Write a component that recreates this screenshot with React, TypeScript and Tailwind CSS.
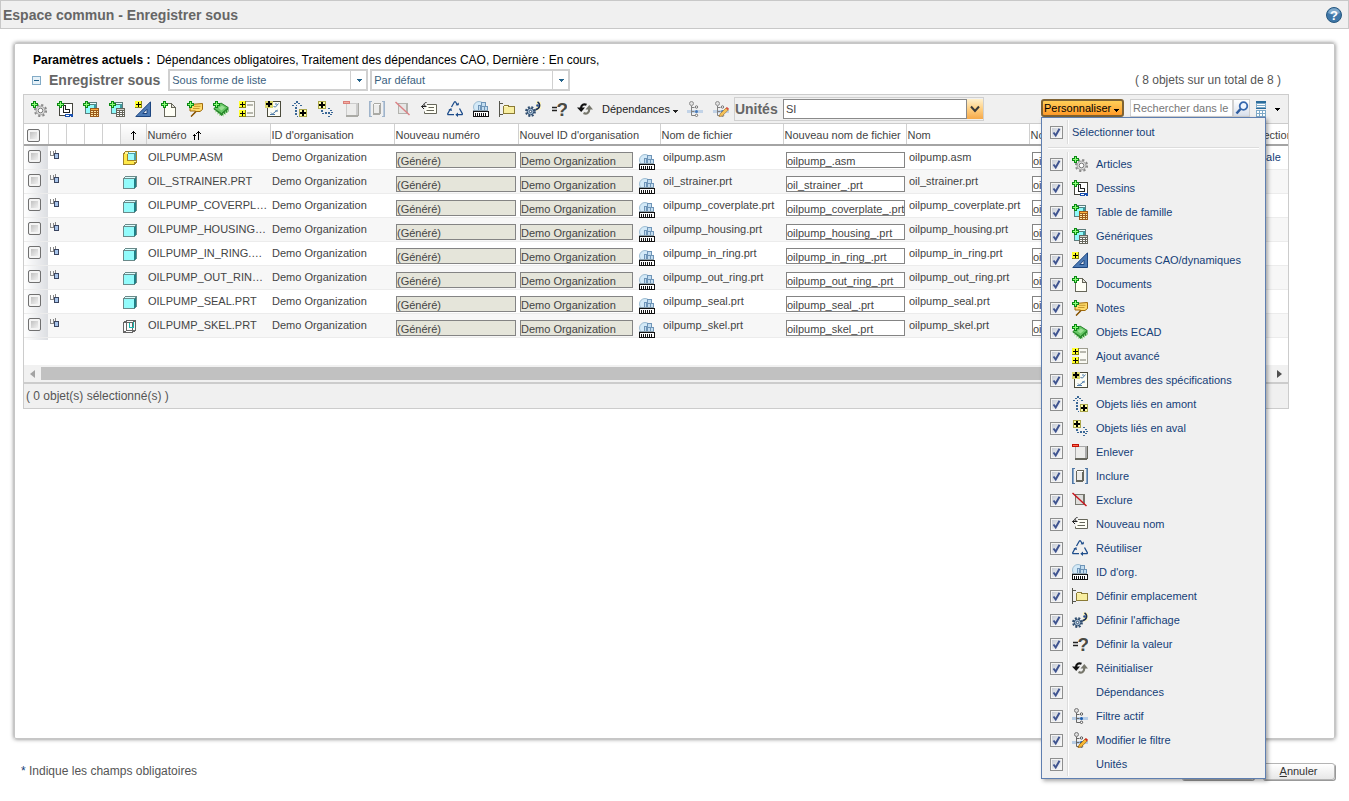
import { useState } from "react";
import type { ReactNode } from "react";
import { clsx } from "clsx";

function Svg({ children, smooth, className }: { children: ReactNode; smooth?: boolean; className?: string }) {
  return (
    <svg
      viewBox="0 0 16 16"
      shapeRendering={smooth ? "auto" : "crispEdges"}
      aria-hidden="true"
      className={clsx("h-4 w-4 shrink-0", className)}
    >
      {children}
    </svg>
  );
}

function GreenPlus() {
  return (
    <g shapeRendering="crispEdges">
      <path d="M2 0h3v2h2v3H5v2H2V5H0V2h2z" fill="#0c8a14" />
      <path d="M3 1h1v2h2v1H4v2H3V4H1V3h2z" fill="#8dff7a" />
    </g>
  );
}

function YellowPlus({ x, y }: { x: number; y: number }) {
  return (
    <g shapeRendering="crispEdges">
      <rect x={x} y={y} width="7" height="7" fill="#8a8610" />
      <rect x={x} y={y} width="6" height="6" fill="#ffff28" />
      <rect x={x + 3} y={y + 1} width="1" height="5" fill="#000" />
      <rect x={x + 1} y={y + 3} width="5" height="1" fill="#000" />
    </g>
  );
}

function BoldPlus({ x, y }: { x: number; y: number }) {
  return (
    <g shapeRendering="crispEdges">
      <rect x={x} y={y} width="8" height="8" fill="#aaa64a" />
      <rect x={x + 1} y={y + 1} width="6" height="6" fill="#ffffa8" />
      <path d={`M${x + 3} ${y + 1}h2v2h2v2h-2v2h-2v-2h-2v-2h2z`} fill="#000" />
    </g>
  );
}

function GearIcon() {
  return (
    <Svg smooth>
      <circle cx="9.500" cy="9.500" r="5.600" fill="none" stroke="#8a8a8a" strokeWidth="2" strokeDasharray="2.200 2.200" />
      <circle cx="9.500" cy="9.500" r="4.400" fill="#d9d9d9" stroke="#a0a0a0" />
      <circle cx="9.500" cy="9.500" r="2.300" fill="#fff" stroke="#7a7a7a" />
      <GreenPlus />
    </Svg>
  );
}

function DrawingIcon() {
  return (
    <Svg>
      <path d="M2 2h14v13H2z" fill="#44443c" />
      <path d="M3 3h12v11H3z" fill="#fff" />
      <path d="M6 4h3v4h4v4H6z" fill="#222" />
      <path d="M7 5h1v4h4v2H7z" fill="#fff" />
      <path d="M8 13h8v3h-2v-1h-1v1H8z" fill="#1950b0" />
      <path d="M9 14h3v1H9z" fill="#fff" />
      <GreenPlus />
    </Svg>
  );
}

function FamilyTableIcon({ head, line, fill }: { head: string; line: string; fill: string }) {
  return (
    <Svg>
      <path d="M2 3l2-2h10v11l-2 1H2z" fill="#5c7c7c" />
      <path d="M3 4h8v8H3z" fill="#8ffafa" />
      <path d="M4 2h9v1H4z" fill="#e6ffff" />
      <path d="M11 3h2v5h-2z" fill="#3d9a9e" />
      <rect x="7" y="7" width="9" height="9" fill={line} />
      <path d="M8 8h7v1H8z" fill={head} />
      <path d="M8 10h2v1H8zM11 10h2v1h-2zM14 10h1v1h-1zM8 12h2v1H8zM11 12h2v1h-2zM14 12h1v1h-1zM8 14h2v1H8zM11 14h2v1h-2zM14 14h1v1h-1z" fill={fill} />
      <GreenPlus />
    </Svg>
  );
}

function CadIcon() {
  return (
    <Svg smooth>
      <path d="M15.500 .8v14.700H.8z" fill="#4c7ab5" stroke="#1c457f" />
      <path d="M12 8.200v4.300H7.800z" fill="#f0f0f0" stroke="#1c457f" />
      <YellowPlus x={0} y={0} />
    </Svg>
  );
}

function DocumentIcon() {
  return (
    <Svg>
      <path d="M3 2h8v1h1v1h1v1h1v1h1v10H3z" fill="#66665a" />
      <path d="M4 3h6v4h4v8H4z" fill="#fffff6" />
      <path d="M11 4h1v1h1v1h-2z" fill="#e6e6dc" />
      <GreenPlus />
    </Svg>
  );
}

function NoteIcon() {
  return (
    <Svg smooth>
      <path d="M3 3.500L15.500 2.500v6L13 10.500H8.500L4.500 15.500l1-1 3-4.500H3z" fill="#ffdb6b" stroke="#a06a0a" />
      <path d="M7 5.300h6.500M6 7.500h6.500" stroke="#c79a30" />
      <path d="M9 10.500L4 15.500" stroke="#8a5a10" strokeWidth="1.500" />
      <GreenPlus />
    </Svg>
  );
}

function EcadIcon() {
  return (
    <Svg smooth>
      <path d="M.5 8L8 2l7.500 4.500v4L8.500 15z" fill="#2b8f2e" />
      <path d="M.8 7.500L8 2l7.200 4.500-6.700 6z" fill="#67c765" stroke="#237a27" strokeWidth=".8" />
      <path d="M2.500 9.500v2M4.500 11v2.500M6.500 12.500v2.500M10.500 12v3.500M12.500 10.500v3.500M14.500 9v3" stroke="#a9dca0" strokeWidth=".8" />
      <path d="M5.500 7l3.500-2.500 3 2-3.500 3z" fill="#9be094" />
      <GreenPlus />
    </Svg>
  );
}

function AdvancedAddIcon() {
  return (
    <Svg>
      <path d="M7 0h9v16H7z" fill="#9d9d90" />
      <path d="M7 1h8v14H7z" fill="#fafaf4" />
      <path d="M8 3h6v2H8zM8 11h6v2H8z" fill="#b8b8ae" />
      <YellowPlus x={0} y={0} />
      <YellowPlus x={0} y={9} />
    </Svg>
  );
}

function SpecMembersIcon() {
  return (
    <Svg>
      <path d="M2 0h14v16H2z" fill="#4b4b3c" />
      <path d="M3 1h12v14H3z" fill="#fcfcf4" />
      <g shapeRendering="auto" fill="none" stroke="#4d7aa8">
        <path d="M8.500 5.500l2 .5 3-3.500M10 3h2M6 11.500l1.500 1.500 5-4M5 13.500h5M10 10h3" />
      </g>
      <path d="M0 0h8v7H0z" fill="#d8d56a" />
      <path d="M3 0h2v2h2v2H5v2H3V4H1V2h2z" fill="#000" />
    </Svg>
  );
}

function UpstreamIcon() {
  return (
    <Svg>
      <path d="M5 0h2v2H5zM3 2h2v1H3zM7 2h2v1H7zM1 4h2v1H1zM9 4h2v1H9zM5 4h1v1H5zM4 6h2v2H4zM4 9h2v2H4zM4 12h2v2H4zM6 15h1v1H6z" fill="#3a6796" />
      <BoldPlus x={8} y={8} />
    </Svg>
  );
}

function DownstreamIcon() {
  return (
    <Svg>
      <path d="M4 9h2v2H4zM5 12h2v1H5zM8 11h2v2H8zM11 11h2v2h-2zM11 7h2v1h-2zM13 9h2v1h-2zM14 11h2v1h-2zM13 13h2v1h-2zM11 15h2v1h-2z" fill="#3a6796" />
      <BoldPlus x={1} y={0} />
    </Svg>
  );
}

function RemoveIcon() {
  return (
    <Svg>
      <path d="M3 2h13v12l-2 2H3z" fill="#66665c" />
      <path d="M3 2h12v12H3z" fill="#aaa" />
      <path d="M4 3h9v11H4z" fill="#ececea" />
      <path d="M0 0h7v3H0z" fill="#c31306" />
      <path d="M1 1h5v1H1z" fill="#ff6a52" />
    </Svg>
  );
}

function IncludeIcon() {
  return (
    <Svg>
      <path d="M0 0h3v1H2v14h1v1H0zM13 0h3v16h-3v-1h1V1h-1z" fill="#5379a5" />
      <path d="M1 1h1v14H1zM14 1h1v14h-1z" fill="#88a8cb" />
      <path d="M4 3l1-1h7v10l-2 2H4z" fill="#66665c" />
      <path d="M5 4h5v8H5z" fill="#ececea" />
      <path d="M5 3h6v1H5z" fill="#fff" />
    </Svg>
  );
}

function ExcludeIcon() {
  return (
    <Svg smooth>
      <path d="M3 2h10v11H3z" fill="#77776e" />
      <path d="M4 3h7v9H4z" fill="#dededc" />
      <path d="M.5 1L14.500 14" stroke="#c8161d" strokeWidth="1.500" />
    </Svg>
  );
}

function RenameIcon() {
  return (
    <Svg smooth>
      <path d="M6 3.500h9.500v9H3.500v-2" fill="#fffff6" stroke="#66665a" />
      <path d="M5.500 1.500C2.500 1.500 2.500 4.500 5 5.500M.5 5.500h5M3 3.500l-2.500 2 2.500 2.500" fill="none" stroke="#222" />
      <path d="M7.500 6.500h5.500M5.500 9.500h7.500" stroke="#66665a" />
    </Svg>
  );
}

function ReuseIcon() {
  return (
    <Svg smooth>
      <path d="M4.500 6L7.500 .8h1l2 3.500M12.500 7.500l3 5.500-.5.700h-4.500M7 13.700H1l-.4-.7L3 8.500" fill="none" stroke="#1e4d8b" strokeWidth="1.300" />
      <path d="M8.500 4.300h3.300V1.500zM11 11.500v4.500l-2.700-2.300zM1.300 9l3-2 .7 3z" fill="#1e4d8b" />
    </Svg>
  );
}

function OrgIcon() {
  return (
    <Svg>
      <circle cx="6" cy="6" r="5.500" fill="#d3e9f7" stroke="#9dbcd2" shapeRendering="auto" />
      <path d="M5 4h3V1h5v4h2v5H5z" fill="#6f95b8" />
      <path d="M6 5h1v4H6zM9 2h3v3H9zM9 6h2v3H9zM12 6h2v3h-2z" fill="#c3ddf0" />
      <path d="M0 9h15v1H0z" fill="#8ba0ae" />
      <path d="M0 10h16v6H0z" fill="#111" />
      <path d="M1 11h14v4H1z" fill="#fff" />
      <path d="M2 12h1v3H2zM4 12h1v3H4zM6 12h1v3H6zM8 12h1v3H8zM10 12h1v3h-1zM12 12h1v3h-1z" fill="#111" />
    </Svg>
  );
}

function LocationIcon() {
  return (
    <Svg>
      <path d="M0 0h1v16H0zM0 2h4v1H0zM0 13h4v1H0z" fill="#55554c" />
      <path d="M4 5l1-1h4l1 1h5l1 1v7H4z" fill="#8a7a35" />
      <path d="M5 6h10v6H5z" fill="#f8eea0" />
      <path d="M5 5h4v1H5z" fill="#fff8c2" />
    </Svg>
  );
}

function DisplayIcon() {
  return (
    <Svg smooth>
      <path d="M11 0l5 1v7l-5 2z" fill="#fff6c0" />
      <circle cx="5.500" cy="10.500" r="4.400" fill="none" stroke="#2f4d6f" strokeWidth="2" strokeDasharray="2 1.500" />
      <circle cx="5.500" cy="10.500" r="3.300" fill="#a4bdd4" stroke="#2f4d6f" />
      <circle cx="5.500" cy="10.500" r="1.200" fill="#fff" stroke="#2f4d6f" />
      <path d="M12.500 .8c3 2 3.200 6-2 8" fill="none" stroke="#1d2f52" strokeWidth="1.600" />
      <circle cx="12.500" cy="4.500" r="1.300" fill="#2a4f96" />
    </Svg>
  );
}

function ValueIcon() {
  return (
    <Svg smooth>
      <path d="M1 6.500h5M1 9.500h5" stroke="#222" strokeWidth="1.500" />
      <text x="5.500" y="15" fontSize="19" fontWeight="bold" fontFamily="Liberation Sans, sans-serif" fill="#4a4a44">
        ?
      </text>
    </Svg>
  );
}

function ResetIcon() {
  return (
    <Svg smooth>
      <path d="M9.500 3.800C6.500 2.500 4 4 4 7.500" fill="none" stroke="#111" strokeWidth="2.200" />
      <path d="M0 6.500h8L4.200 11z" fill="#111" />
      <path d="M6.500 12c3 1.500 5.800 0 5.800-4" fill="none" stroke="#77776c" strokeWidth="2.200" />
      <path d="M8.500 8.500H16L12.300 4z" fill="#77776c" />
    </Svg>
  );
}

function FilterTree() {
  return (
    <>
      <path d="M0 9h16v3H0z" fill="#b7cde6" />
      <circle cx="4.500" cy="2.500" r="2" fill="#ddd" stroke="#777" />
      <path d="M4.500 5v9.500H8M4.500 6.500h3M4.500 10.500h3" fill="none" stroke="#666" />
      <circle cx="9.500" cy="6" r="1.200" fill="#fff" stroke="#555" />
      <circle cx="9.500" cy="10.500" r="1.500" fill="#1b5cad" />
      <circle cx="9.500" cy="14.300" r="1.200" fill="#fff" stroke="#555" />
    </>
  );
}

function FilterIcon() {
  return (
    <Svg smooth>
      <FilterTree />
    </Svg>
  );
}

function EditFilterIcon() {
  return (
    <Svg smooth>
      <FilterTree />
      <path d="M6 15.800l1.200-3 6-6 2.200 2-6 6z" fill="#f7b733" stroke="#8f5a0d" strokeWidth=".7" />
      <path d="M12.700 7.200l1.300-1.200 2 1.800-1.200 1.500z" fill="#d3281e" />
    </Svg>
  );
}

function PartIcon() {
  return (
    <Svg>
      <path d="M1 4l2-2h12v10l-2 3H1z" fill="#6a8a8a" />
      <path d="M2 5h10v9H2z" fill="#92fbfb" />
      <path d="M3 3h10v1H3z" fill="#dcffff" />
      <path d="M12 5l2-2v9l-2 2z" fill="#1f7f86" />
    </Svg>
  );
}

function AssemblyIcon() {
  return (
    <Svg>
      <path d="M1 3l2-2h12v11l-3 3H1z" fill="#a08328" />
      <path d="M2 4h3v7h7v3H2z" fill="#ffe94a" />
      <path d="M3 2h3v2H3zM12 11h2v1h-2z" fill="#fff6a0" />
      <path d="M6 2h8v8H6z" fill="#4fa0a6" />
      <path d="M6 4h6v6H6z" fill="#9ffcfc" />
      <path d="M7 2h6v1H7z" fill="#e6ffff" />
    </Svg>
  );
}

function SkeletonIcon() {
  return (
    <Svg>
      <path d="M1.500 4.500h9v10h-9zM4.500 2.500h9v10h-9zM1.500 4.500l3-2M10.500 4.500l3-2M10.500 14.500l3-2M1.500 14.500l3-2" fill="#fff" fillOpacity=".5" stroke="#666" />
      <path d="M7.500 5v4.500h4V4" fill="none" stroke="#17b5ad" />
    </Svg>
  );
}

function StatusIcon() {
  return (
    <svg viewBox="0 0 10 10" shapeRendering="crispEdges" aria-hidden="true" className="h-2.5 w-2.5">
      <path d="M0 1h1v4H0zM0 5h4v1H0zM3 1h1v4H3z" fill="#8a8a8a" />
      <path d="M4 3h5v6H4z" fill="#3a4560" />
      <path d="M5 4h3v4H5z" fill="#a8c4ea" />
      <path d="M5 0h1v3H5z" fill="#888" />
    </svg>
  );
}

interface Tool {
  label: string;
  icon?: ReactNode;
  disabled?: boolean;
}

const TOOLS: Tool[] = [
  { label: "Articles", icon: <GearIcon /> },
  { label: "Dessins", icon: <DrawingIcon /> },
  { label: "Table de famille", icon: <FamilyTableIcon head="#ffb13d" line="#9a5a1c" fill="#ffe9a8" /> },
  { label: "Génériques", icon: <FamilyTableIcon head="#d0d0c8" line="#66665c" fill="#ffffff" /> },
  { label: "Documents CAO/dynamiques", icon: <CadIcon /> },
  { label: "Documents", icon: <DocumentIcon /> },
  { label: "Notes", icon: <NoteIcon /> },
  { label: "Objets ECAD", icon: <EcadIcon /> },
  { label: "Ajout avancé", icon: <AdvancedAddIcon /> },
  { label: "Membres des spécifications", icon: <SpecMembersIcon /> },
  { label: "Objets liés en amont", icon: <UpstreamIcon /> },
  { label: "Objets liés en aval", icon: <DownstreamIcon /> },
  { label: "Enlever", icon: <RemoveIcon />, disabled: true },
  { label: "Inclure", icon: <IncludeIcon />, disabled: true },
  { label: "Exclure", icon: <ExcludeIcon />, disabled: true },
  { label: "Nouveau nom", icon: <RenameIcon /> },
  { label: "Réutiliser", icon: <ReuseIcon /> },
  { label: "ID d'org.", icon: <OrgIcon /> },
  { label: "Définir emplacement", icon: <LocationIcon /> },
  { label: "Définir l'affichage", icon: <DisplayIcon /> },
  { label: "Définir la valeur", icon: <ValueIcon /> },
  { label: "Réinitialiser", icon: <ResetIcon /> },
  { label: "Dépendances" },
  { label: "Filtre actif", icon: <FilterIcon /> },
  { label: "Modifier le filtre", icon: <EditFilterIcon /> },
  { label: "Unités" },
];

const ACTION_TOOLS = TOOLS.slice(0, 22);
const FILTER_TOOLS = TOOLS.slice(23, 25);

const ROWS = [
  { number: "OILPUMP.ASM", file: "oilpump.asm", newFile: "oilpump_.asm", icon: <AssemblyIcon />, selection: "Initiale" },
  { number: "OIL_STRAINER.PRT", file: "oil_strainer.prt", newFile: "oil_strainer_.prt", icon: <PartIcon /> },
  { number: "OILPUMP_COVERPLATE.PRT", file: "oilpump_coverplate.prt", newFile: "oilpump_coverplate_.prt", icon: <PartIcon /> },
  { number: "OILPUMP_HOUSING.PRT", file: "oilpump_housing.prt", newFile: "oilpump_housing_.prt", icon: <PartIcon /> },
  { number: "OILPUMP_IN_RING.PRT", file: "oilpump_in_ring.prt", newFile: "oilpump_in_ring_.prt", icon: <PartIcon /> },
  { number: "OILPUMP_OUT_RING.PRT", file: "oilpump_out_ring.prt", newFile: "oilpump_out_ring_.prt", icon: <PartIcon /> },
  { number: "OILPUMP_SEAL.PRT", file: "oilpump_seal.prt", newFile: "oilpump_seal_.prt", icon: <PartIcon /> },
  { number: "OILPUMP_SKEL.PRT", file: "oilpump_skel.prt", newFile: "oilpump_skel_.prt", icon: <SkeletonIcon /> },
];

function Caret({ className }: { className?: string }) {
  return (
    <svg viewBox="0 0 6 3" shapeRendering="crispEdges" aria-hidden="true" className={clsx("h-[3px] w-1.5 shrink-0", className)}>
      <path d="M0 0h6L3 3z" fill="currentColor" />
    </svg>
  );
}

function Tick({ label, checked, onChange }: { label: string; checked: boolean; onChange: (v: boolean) => void }) {
  return (
    <span className="inline-grid h-[13px] w-[13px] shrink-0">
      <input
        type="checkbox"
        aria-label={label}
        checked={checked}
        onChange={(e) => onChange(e.target.checked)}
        className="col-start-1 row-start-1 h-[13px] w-[13px] appearance-none border border-[#8e8f8f] bg-linear-to-br from-[#c4c9d2] to-white shadow-[inset_0_0_0_1px_#f4f4f4]"
      />
      {checked && (
        <svg viewBox="0 0 13 13" aria-hidden="true" className="pointer-events-none col-start-1 row-start-1 h-[13px] w-[13px]">
          <path d="M3.500 6.500L5.700 9.500 9.500 2.800" fill="none" stroke="#3f5490" strokeWidth="2" />
        </svg>
      )}
    </span>
  );
}

function RowCheckbox({ label }: { label: string }) {
  return (
    <input
      type="checkbox"
      aria-label={label}
      className="block h-[13px] w-[13px] appearance-none rounded-[2px] border border-[#707070] bg-linear-to-br from-[#b4b4b4] to-white shadow-[inset_0_0_0_2px_#f4f4f4] checked:bg-[#3f5490]"
    />
  );
}

function ViewSelect({ label, value }: { label: string; value: string }) {
  return (
    <div className="flex h-[22px] w-[200px] border-2 border-[#d0d0d0] bg-white">
      <select aria-label={label} defaultValue={value} className="min-w-0 flex-1 appearance-none px-0.5 text-[11px] text-[#3b5f80] outline-none">
        <option>{value}</option>
      </select>
      <span className="flex w-4 items-center justify-center border-l border-[#d0d0d0] text-[#23628a]">
        <Caret />
      </span>
    </div>
  );
}

function CustomizeMenu() {
  const [hidden, setHidden] = useState<string[]>([]);
  const toggle = (label: string, on: boolean) =>
    setHidden((prev) => (on ? prev.filter((l) => l !== label) : [...prev, label]));

  return (
    <div className="absolute top-full left-0 z-20 w-[225px] border border-[#5f7fb0] bg-[#f0f0f0] py-0.5 text-[11px] text-[#154078] shadow-[2px_2px_4px_rgba(0,0,0,0.35)]">
      <label className="flex h-6 items-center pl-2">
        <Tick
          label="Sélectionner tout"
          checked={hidden.length === 0}
          onChange={(on) => setHidden(on ? [] : TOOLS.map((t) => t.label))}
        />
        <span className="ml-1 h-full border-l border-[#dcdcdc] pl-1 leading-6 shadow-[inset_1px_0_0_#fff]">Sélectionner tout</span>
      </label>
      <div className="mx-1.5 my-[3px] h-0.5 border-b border-white bg-[#dcdcdc]" />
      {TOOLS.map((tool) => (
        <label key={tool.label} className="flex h-6 items-center pl-2">
          <Tick label={tool.label} checked={!hidden.includes(tool.label)} onChange={(on) => toggle(tool.label, on)} />
          <span className="ml-1 flex h-full items-center gap-2 border-l border-[#dcdcdc] pl-1 shadow-[inset_1px_0_0_#fff]">
            <span className="h-4 w-4">{tool.icon}</span>
            {tool.label}
          </span>
        </label>
      ))}
    </div>
  );
}

function Toolbar() {
  const [open, setOpen] = useState(true);

  return (
    <div className="flex h-[30px] items-center border border-[#cccccc] bg-[#f0f0f0] pr-2 pl-0.5">
      {ACTION_TOOLS.map((tool) => (
        <button
          key={tool.label}
          type="button"
          title={tool.label}
          disabled={tool.disabled}
          className="flex h-6 w-[26px] shrink-0 items-center justify-center disabled:opacity-50"
        >
          {tool.icon}
        </button>
      ))}
      <button type="button" className="flex h-6 shrink-0 items-center gap-0.5 px-1 text-[11px] text-[#222222]">
        Dépendances
        <Caret className="mt-1" />
      </button>
      {FILTER_TOOLS.map((tool) => (
        <button key={tool.label} type="button" title={tool.label} className="flex h-6 w-[26px] shrink-0 items-center justify-center opacity-80">
          {tool.icon}
        </button>
      ))}
      <div className="flex h-6 w-[250px] shrink-0 items-center border border-[#d0d0d0]">
        <label htmlFor="unites" className="w-12 shrink-0 text-sm font-bold text-[#666666]">
          Unités
        </label>
        <select id="unites" defaultValue="SI" className="h-5 min-w-0 flex-1 appearance-none border border-[#8a8a8a] bg-white px-0.5 text-[11px] text-[#444444] outline-none">
          <option>SI</option>
        </select>
        <span className="flex h-5 w-4 items-center justify-center bg-linear-to-b from-[#fff0cc] via-[#ffcf80] to-[#f5a94a]">
          <svg viewBox="0 0 10 8" aria-hidden="true" className="h-2 w-2.5">
            <path d="M1 1.500l4 4.500 4-4.500" fill="none" stroke="#3a3a3a" strokeWidth="2" />
          </svg>
        </span>
      </div>

      <div className="mt-1 ml-auto flex shrink-0 items-start self-start">
        <div className="relative">
          <button
            type="button"
            aria-expanded={open}
            onClick={() => setOpen((v) => !v)}
            className="flex h-[18px] w-[83px] items-center gap-0.5 rounded-[3px] border-2 border-[#7f6334] bg-linear-to-b from-[#ffcf57] to-[#ff9a28] pl-px text-[11px] text-black"
          >
            Personnaliser
            <Caret className="mt-1" />
          </button>
          {open && <CustomizeMenu />}
        </div>
        <input
          type="text"
          aria-label="Rechercher dans le tableau"
          placeholder="Rechercher dans le tableau"
          className="ml-1.5 h-[18px] w-[103px] border border-[#d0d0d0] bg-white px-0.5 text-[11px] outline-none placeholder:text-[#777777]"
        />
        <button type="button" title="Rechercher" className="flex h-[18px] w-[17px] items-center justify-center border border-[#d0d0d0] bg-linear-to-b from-white to-[#d8dfeb]">
          <svg viewBox="0 0 14 14" aria-hidden="true" className="h-3.5 w-3.5">
            <circle cx="8.500" cy="5" r="3.800" fill="#eef5ff" stroke="#3567ad" strokeWidth="1.800" />
            <path d="M5.500 8L1.500 12.500" stroke="#2e5d9f" strokeWidth="2.500" />
          </svg>
        </button>
        <button type="button" title="Affichage du tableau" className="mt-0.5 ml-1.5 flex items-center gap-2 text-black">
          <svg viewBox="0 0 10 16" shapeRendering="crispEdges" aria-hidden="true" className="h-4 w-2.5">
            <path d="M0 0h10v16H0z" fill="#7da9c7" />
            <path d="M0 0h10v2H0z" fill="#2b6c9b" />
            <path d="M1 3h8v1H1zM1 5h8v1H1zM1 10h2v2H1zM4 10h2v2H4zM7 10h2v2H7zM1 13h2v2H1zM4 13h2v2H4zM7 13h2v2H7z" fill="#fff" />
            <path d="M0 7h10v1H0z" fill="#2b6c9b" />
            <path d="M0 8h10v1H0z" fill="#f0f0f0" />
          </svg>
          <Caret />
        </button>
      </div>
    </div>
  );
}

const HEAD_CELL = "h-[21px] truncate border-r border-b-2 border-r-[#d0d0d0] border-b-[#a4a4a4] px-px pt-0.5 text-left font-normal";
const FIELD = "block h-4 shrink-0 border border-[#848484] pt-0.5 text-[11px] leading-3 text-[#444444] outline-none";

function ObjectTable() {
  return (
    <table className="w-[1346px] table-fixed border-collapse text-[11px] text-[#444444]">
      <colgroup>
        <col className="w-6" />
        <col className="w-[18px]" />
        <col className="w-[18px]" />
        <col className="w-[18px]" />
        <col className="w-[18px]" />
        <col className="w-[26px]" />
        <col className="w-[124px]" />
        <col className="w-[124px]" />
        <col className="w-[124px]" />
        <col className="w-[142px]" />
        <col className="w-[123px]" />
        <col className="w-[123px]" />
        <col className="w-[123px]" />
        <col className="w-[123px]" />
        <col className="w-[94px]" />
        <col className="w-[124px]" />
      </colgroup>
      <thead>
        <tr>
          <th className={HEAD_CELL}>
            <div className="pl-0.5">
              <RowCheckbox label="Tout sélectionner" />
            </div>
          </th>
          <th className={HEAD_CELL} />
          <th className={HEAD_CELL} />
          <th className={HEAD_CELL} />
          <th className={HEAD_CELL} />
          <th className={clsx(HEAD_CELL, "bg-linear-to-b from-white to-[#ececec]")}>
            <svg viewBox="0 0 5 9" shapeRendering="crispEdges" aria-hidden="true" className="mx-auto h-[9px] w-[5px]">
              <path d="M2 0h1v9H2zM1 1h2v1H1zM0 2h1v1H0zM4 2h1v1H4zM3 1h1v1H3z" fill="#000" />
            </svg>
          </th>
          <th className={clsx(HEAD_CELL, "bg-linear-to-b from-white to-[#ececec]")}>
            <span className="flex items-center gap-1.5">
              Numéro
              <svg viewBox="0 0 8 9" shapeRendering="crispEdges" aria-hidden="true" className="h-[9px] w-2">
                <path d="M5 0h1v9H5zM4 1h3v1H4zM3 2h1v1H3zM7 2h1v1H7zM1 3h1v6H1zM0 4h3v1H0z" fill="#000" />
              </svg>
            </span>
          </th>
          <th className={HEAD_CELL}>ID d'organisation</th>
          <th className={HEAD_CELL}>Nouveau numéro</th>
          <th className={HEAD_CELL}>Nouvel ID d'organisation</th>
          <th className={HEAD_CELL}>Nom de fichier</th>
          <th className={HEAD_CELL}>Nouveau nom de fichier</th>
          <th className={HEAD_CELL}>Nom</th>
          <th className={HEAD_CELL}>Nouveau nom</th>
          <th className={HEAD_CELL}>Version</th>
          <th className={HEAD_CELL}>Sélectionné</th>
        </tr>
      </thead>
      <tbody>
        {ROWS.map((row) => (
          <tr key={row.number} className="h-6 border-b border-[#ececec] align-top even:bg-[#f7f7f7]">
            <td className="bg-linear-to-r from-white to-[#dcdee2] p-0 pt-1 pl-1">
              <RowCheckbox label={row.number} />
            </td>
            <td className="pt-1 pl-0.5">
              <StatusIcon />
            </td>
            <td />
            <td />
            <td />
            <td className="pt-1 pl-0.5">{row.icon}</td>
            <td className="truncate px-0.5 leading-[23px]">{row.number}</td>
            <td className="truncate px-0.5 leading-[23px]">Demo Organization</td>
            <td className="px-0.5 pt-1.5">
              <input aria-label="Nouveau numéro" readOnly value="(Généré)" className={clsx(FIELD, "w-[120px] bg-[#e5e5da]")} />
            </td>
            <td className="px-0.5 pt-1.5">
              <div className="flex h-4 gap-1.5">
                <input aria-label="Nouvel ID d'organisation" readOnly value="Demo Organization" className={clsx(FIELD, "w-[113px] bg-[#e5e5da]")} />
                <button type="button" title="Organisation" className="mt-0.5 h-4 w-4">
                  <OrgIcon />
                </button>
              </div>
            </td>
            <td className="truncate px-[3px] leading-[23px]">{row.file}</td>
            <td className="px-[3px] pt-1.5">
              <input aria-label="Nouveau nom de fichier" defaultValue={row.newFile} className={clsx(FIELD, "w-[119px] bg-white")} />
            </td>
            <td className="truncate px-[3px] leading-[23px]">{row.file}</td>
            <td className="px-[3px] pt-1.5">
              <input aria-label="Nouveau nom" defaultValue={row.newFile} className={clsx(FIELD, "w-[119px] bg-white")} />
            </td>
            <td />
            <td className="px-[3px] leading-[23px] text-[#154078]">{row.selection}</td>
          </tr>
        ))}
      </tbody>
    </table>
  );
}

function DialogButton({ children }: { children: ReactNode }) {
  return (
    <button
      type="button"
      className="h-[17px] w-[73px] rounded-[3px] border border-[#b4b4b4] bg-linear-to-b from-white to-[#e8e8e8] text-[11px] leading-[15px] text-[#333333] shadow-[1px_1px_0_#999]"
    >
      {children}
    </button>
  );
}

export default function App() {
  return (
    <div className="flex min-h-screen flex-col bg-white font-['Liberation_Sans',Arial,sans-serif] text-xs text-[#555555]">
      <header className="flex h-[29px] items-center justify-between border border-[#c8c8c8] bg-[#f0f0f0] pr-1.5 pl-0.5">
        <h1 className="text-sm font-bold text-[#666666]">Espace commun - Enregistrer sous</h1>
        <button type="button" title="Aide">
          <Svg smooth>
            <circle cx="8" cy="8" r="7.500" fill="#3f77a8" stroke="#27587f" />
            <path d="M2 6a6.200 6.200 0 0 1 12 0q-6 3-12 0z" fill="#7fa9cb" />
            <text x="8" y="12.500" textAnchor="middle" fontSize="13" fontWeight="bold" fontFamily="Liberation Sans, sans-serif" fill="#fff">
              ?
            </text>
          </Svg>
        </button>
      </header>

      <main className="mx-3.5 mt-3.5 flex-1 rounded-[2px] border border-[#c6c6c6] pt-2 pr-[45px] pl-2 shadow-[0_0_4px_#777]">
        <p className="pl-2.5 leading-4 text-black">
          <strong className="mr-1.5">Paramètres actuels :</strong>
          Dépendances obligatoires, Traitement des dépendances CAO, Dernière : En cours,
        </p>
        <div className="mb-0.5 flex h-6 items-center pl-2.5">
          <button type="button" title="Réduire" className="mr-2 -ml-px">
            <svg viewBox="0 0 9 9" shapeRendering="crispEdges" aria-hidden="true" className="h-[9px] w-[9px]">
              <rect x=".5" y=".5" width="8" height="8" rx="1" fill="#e6f1f8" stroke="#83abc6" />
              <path d="M2 4h5v1H2z" fill="#1f5f88" />
            </svg>
          </button>
          <h2 className="mr-2 text-sm font-bold text-[#666666]">Enregistrer sous</h2>
          <div className="flex gap-0.5">
            <ViewSelect label="Affichage" value="Sous forme de liste" />
            <ViewSelect label="Vue" value="Par défaut" />
          </div>
          <span className="mr-2 ml-auto">( 8 objets sur un total de 8 )</span>
        </div>

        <Toolbar />

        <div className="overflow-hidden border-x border-[#cccccc]">
          <ObjectTable />
          <div className="h-[27px]">
            <div className="h-0.5 w-6 bg-linear-to-r from-white to-[#dcdee2]" />
          </div>
          <div className="flex h-[17px] items-center justify-between bg-[#f1f1f1] px-1.5">
            <svg viewBox="0 0 5 8" aria-hidden="true" className="h-2 w-[5px]">
              <path d="M5 0v8L0 4z" fill="#a3a3a3" />
            </svg>
            <div className="mr-9 ml-1.5 h-[13px] flex-1 bg-[#c1c1c1]" />
            <svg viewBox="0 0 5 8" aria-hidden="true" className="h-2 w-[5px]">
              <path d="M0 0v8l5-4z" fill="#505050" />
            </svg>
          </div>
        </div>
        <div className="h-[27px] border border-t-2 border-[#cccccc] bg-[#f0f0f0] pl-0.5 leading-[25px]">( 0 objet(s) sélectionné(s) )</div>
      </main>

      <footer className="flex h-[62px] items-center justify-between pt-0.5 pr-3.5 pl-[21px]">
        <span>
          <span className="text-[#154078]">*</span> Indique les champs obligatoires
        </span>
        <div className="flex gap-2">
          <DialogButton>OK</DialogButton>
          <DialogButton>
            <span className="underline">A</span>nnuler
          </DialogButton>
        </div>
      </footer>
    </div>
  );
}
